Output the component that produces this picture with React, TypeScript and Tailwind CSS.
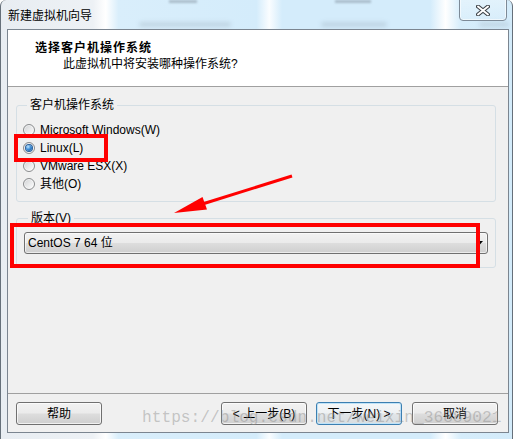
import React from "react";

function Radio({ checked, label }: { checked?: boolean; label: string }) {
  return (
    <div className="flex items-center h-[18px]">
      <span className="flex items-center justify-center w-[12px] h-[12px] rounded-full border border-[#8a8c8e] bg-[linear-gradient(135deg,#cfd1d3_0%,#e8e9ea_50%,#ffffff_100%)] shadow-[inset_0_0_0_1px_rgba(255,255,255,0.6)]">
        {checked && (
          <span className="w-[6px] h-[6px] rounded-full bg-[radial-gradient(circle_at_35%_30%,#bfe6ff_0%,#3f8fd8_45%,#14508f_100%)] shadow-[0_0_0_1px_#2a5f9a]" />
        )}
      </span>
      <span className="ml-[5px] leading-[14px]">{label}</span>
    </div>
  );
}

function Button({ label, focused }: { label: string; focused?: boolean }) {
  return (
    <div
      className={
        focused
          ? "flex items-center justify-center w-[86px] h-[23px] rounded-[3px] border border-[#3c7fb1] bg-[linear-gradient(180deg,#f4f7f9_0%,#eef1f3_48%,#e1e5e8_52%,#d8dde0_100%)] shadow-[inset_0_0_0_1px_#bfe3f8]"
          : "flex items-center justify-center w-[86px] h-[23px] rounded-[3px] border border-[#707070] bg-[linear-gradient(180deg,#f2f2f2_0%,#ebebeb_48%,#dddddd_52%,#cfcfcf_100%)] shadow-[inset_0_0_0_1px_rgba(255,255,255,0.7)]"
      }
    >
      <span className="leading-[14px]">{label}</span>
    </div>
  );
}

export default function App() {
  return (
    <div className="relative w-[513px] h-[439px] overflow-hidden bg-white font-['Liberation_Sans','Noto_Sans_CJK_SC',sans-serif] text-[12px] text-black">
      <div className="relative flex flex-col w-full h-full rounded-t-[6px] border-x border-[#66707a] bg-[linear-gradient(90deg,#e8edf2_0%,#edf1f5_18%,#ffffff_20.5%,#d9eefb_23%,#d4ecfb_50%,#fafdff_52.5%,#d4ecfb_55%,#d4ecfb_84%,#ffffff_87%,#d6edfb_90%,#d3ebfa_100%)]">
        {/* blurred background behind glass */}
        <div className="absolute left-[168px] top-0 w-[28px] h-[3px] bg-[#5a6470]/35 blur-[1px]" />
        <div className="absolute left-[334px] top-0 w-[36px] h-[3px] bg-[#5a6470]/35 blur-[1px]" />
        <div className="absolute left-[138px] top-[22px] w-[92px] h-[5px] rounded-full bg-[#6d7c8a]/20 blur-[2px]" />
        <div className="absolute left-[320px] top-[22px] w-[66px] h-[5px] rounded-full bg-[#6d7c8a]/20 blur-[2px]" />
        <div className="absolute left-[478px] top-[22px] w-[30px] h-[5px] rounded-full bg-[#6d7c8a]/18 blur-[2px]" />

        {/* Title bar */}
        <div className="relative flex items-center h-[29px] pl-[7px] pt-[2px]">
          <span className="leading-[14px] text-[#000]">新建虚拟机向导</span>
          <div className="absolute left-[458px] top-[-3px] flex items-center justify-center w-[48px] h-[24px] pt-[3px] rounded-b-[4px] border border-[#7d8a97] bg-[linear-gradient(180deg,rgba(255,255,255,0.35),rgba(255,255,255,0.1))] shadow-[inset_0_0_0_1px_rgba(255,255,255,0.6)]">
            <svg width="14" height="11" viewBox="0 0 14 11">
              <path d="M2 1.5 L12 9.5 M12 1.5 L2 9.5" stroke="#3a3f45" strokeWidth="4" strokeLinecap="round" />
              <path d="M2 1.5 L12 9.5 M12 1.5 L2 9.5" stroke="#ffffff" strokeWidth="2" strokeLinecap="round" />
            </svg>
          </div>
        </div>

        {/* Client area */}
        <div className="relative flex flex-col flex-1 ml-[6px] mr-[3px] border border-[#7b8590] bg-[#f0f0f0]">
          {/* Header */}
          <div className="flex flex-col h-[57px] pt-[11px] pl-[27px] bg-white border-b border-[#a0a0a0]">
            <div className="font-bold tracking-[1px] leading-[15px]">选择客户机操作系统</div>
            <div className="ml-[28px] mt-[1px] leading-[15px]">此虚拟机中将安装哪种操作系统?</div>
          </div>

          {/* Body */}
          <div className="flex flex-col flex-1 pt-[11px]">
            <fieldset className="ml-[8px] mr-[12px] pb-[8px] pt-[9px] pl-[6px] border border-[#d5dfe5] rounded-[3px]">
              <legend className="ml-[4px] px-[3px] leading-[14px]">客户机操作系统</legend>
              <Radio label="Microsoft Windows(W)" />
              <Radio label="Linux(L)" checked />
              <Radio label="VMware ESX(X)" />
              <Radio label="其他(O)" />
            </fieldset>

            <fieldset className="mt-[9px] ml-[8px] mr-[12px] pt-[7px] pb-[13px] px-[7px] border border-[#d5dfe5] rounded-[3px]">
              <legend className="ml-[4px] px-[3px] leading-[14px]">版本(V)</legend>
              <div className="flex items-center h-[22px] pl-[3px] pr-[4px] rounded-[3px] border border-[#707070] bg-[linear-gradient(180deg,#f2f2f2_0%,#ebebeb_48%,#dddddd_52%,#cfcfcf_100%)] shadow-[inset_0_0_0_1px_rgba(255,255,255,0.6)]">
                <span className="flex-1 leading-[14px]">CentOS 7 64 位</span>
                <svg width="7" height="4" viewBox="0 0 7 4">
                  <path d="M0 0 H7 L3.5 4 Z" fill="#000" />
                </svg>
              </div>
            </fieldset>

            <div className="flex-1" />

            <div className="flex items-start h-[39px] pt-[8px] pb-[7px] pl-[8px] pr-[10px] border-t border-[#a0a0a0]">
              <Button label="帮助" />
              <div className="flex-1" />
              <Button label="< 上一步(B)" />
              <div className="w-[9px]" />
              <Button label="下一步(N) >" focused />
              <div className="w-[10px]" />
              <Button label="取消" />
            </div>
          </div>
        </div>
        <div className="h-[6px]" />
      </div>

      {/* Watermark */}
      <div className="absolute left-[142px] top-[410px] font-['Liberation_Mono',monospace] text-[16.2px] leading-none text-[rgba(140,140,140,0.45)] whitespace-nowrap pointer-events-none">
        https://blog.csdn.net/weixin_36889021
      </div>

      {/* Red annotations */}
      <div className="absolute left-[14px] top-[134px] w-[94px] h-[28px] border-[4px] border-[#ff0000] pointer-events-none" />
      <div className="absolute left-[10px] top-[223px] w-[470px] h-[45px] border-[4px] border-[#ff0000] pointer-events-none" />
      <svg className="absolute left-0 top-0 pointer-events-none" width="513" height="439" viewBox="0 0 513 439">
        <line x1="292" y1="176" x2="204" y2="203.5" stroke="#ff0000" strokeWidth="3" />
        <polygon points="174,213 202.5,197 207,209.5" fill="#ff0000" />
      </svg>
    </div>
  );
}
